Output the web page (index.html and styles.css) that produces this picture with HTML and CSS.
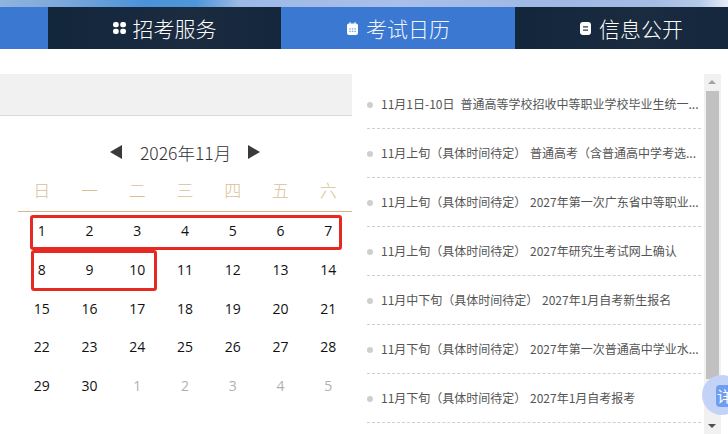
FILE: index.html
```html
<!DOCTYPE html>
<html lang="zh">
<head>
<meta charset="utf-8">
<title>考试日历</title>
<link rel="stylesheet" href="styles.css">
</head>
<body>
<div class="banner"></div>
<nav class="nav">
  <div class="nav-edge"></div>
  <a class="nav-item dark tab-a">
    <svg class="ico ico-a" viewBox="0 0 13 12"><rect x="0" y="0" width="5.800" height="5.300" rx="2.300"/><rect x="7.200" y="0" width="5.800" height="5.300" rx="2.300"/><rect x="0" y="6.700" width="5.800" height="5.300" rx="2.300"/><rect x="7.200" y="6.700" width="5.800" height="5.300" rx="2.300"/></svg>
    <span>招考服务</span>
  </a>
  <a class="nav-item active tab-b">
    <svg class="ico ico-b" viewBox="0 0 11 13"><path d="M2.500 0h1v1.500h4V0h1v1.500h.5a2 2 0 0 1 2 2v7.500a2 2 0 0 1-2 2H2a2 2 0 0 1-2-2V3.500a2 2 0 0 1 2-2h.5z"/><path class="cut" d="M2.300 6.200h1.500v1.200H2.300zM4.800 6.200h1.500v1.200H4.800zM7.300 6.200h1.500v1.200H7.300zM2.300 8.800h1.500V10H2.300zM4.800 8.800h1.500V10H4.800zM7.300 8.800h1.500V10H7.300z"/></svg>
    <span>考试日历</span>
  </a>
  <a class="nav-item dark tab-c">
    <svg class="ico ico-c" viewBox="0 0 11 13"><path d="M3 0h5a3 3 0 0 1 3 3v7a3 3 0 0 1-3 3H3a3 3 0 0 1-3-3V3a3 3 0 0 1 3-3z"/><path class="cut" d="M3 4.200h5v1.200H3zM3 7.500h5v1.200H3z"/></svg>
    <span>信息公开</span>
  </a>
</nav>

<main class="content">
  <section class="calendar">
    <div class="cal-head"></div>
    <div class="cal-body">
      <div class="month">
        <span class="arrow left"></span>
        <span class="month-label">2026年11月</span>
        <span class="arrow right"></span>
      </div>
      <div class="weekdays">
        <span>日</span><span>一</span><span>二</span><span>三</span><span>四</span><span>五</span><span>六</span>
      </div>
      <div class="days">
        <span>1</span><span>2</span><span>3</span><span>4</span><span>5</span><span>6</span><span>7</span>
        <span>8</span><span>9</span><span>10</span><span>11</span><span>12</span><span>13</span><span>14</span>
        <span>15</span><span>16</span><span>17</span><span>18</span><span>19</span><span>20</span><span>21</span>
        <span>22</span><span>23</span><span>24</span><span>25</span><span>26</span><span>27</span><span>28</span>
        <span>29</span><span>30</span><span class="other">1</span><span class="other">2</span><span class="other">3</span><span class="other">4</span><span class="other">5</span>
        <div class="mark mark-a"></div>
        <div class="mark mark-b"></div>
      </div>
    </div>
  </section>

  <section class="events">
    <ul class="event-list">
      <li>11月1日-10日&ensp;普通高等学校招收中等职业学校毕业生统一...</li>
      <li>11月上旬（具体时间待定） 普通高考（含普通高中学考选...</li>
      <li>11月上旬（具体时间待定） 2027年第一次广东省中等职业...</li>
      <li>11月上旬（具体时间待定） 2027年研究生考试网上确认</li>
      <li>11月中下旬（具体时间待定） 2027年1月自考新生报名</li>
      <li>11月下旬（具体时间待定） 2027年第一次普通高中学业水...</li>
      <li>11月下旬（具体时间待定） 2027年1月自考报考</li>
    </ul>
    <div class="scrollbar">
      <span class="sb-up"></span>
      <span class="sb-thumb"></span>
      <span class="sb-down"></span>
    </div>
  </section>
</main>

<div class="float-btn"><span>详</span></div>
</body>
</html>
```

FILE: styles.css
```css
* { box-sizing: border-box; }
html, body { margin: 0; padding: 0; }
body {
  width: 728px;
  height: 434px;
  overflow: hidden;
  position: relative;
  background: #fff;
  font-family: "Noto Sans CJK SC", "Noto Sans", sans-serif;
}
.banner {
  height: 7px;
  background: linear-gradient(90deg, #8fb4de 0%, #7fa9da 8%, #4a93d8 20%, #4f97da 27%, #9db9e6 33%, #a9bfe9 55%, #9fb8e4 75%, #a5bce4 90%, #b5c8e8 96%, #e6ecf6 100%);
}
.nav { display: flex; height: 42px; background: #3a78d2; }
.nav-edge { width: 48px; }
.nav-item {
  display: flex;
  align-items: center;
  justify-content: center;
  color: #fff;
  font-size: 21px;
  font-weight: 300;
}
.tab-a { width: 233px; gap: 7px; }
.tab-b { width: 234px; gap: 8px; padding-left: 1px; }
.tab-c { width: 213px; gap: 8px; padding-left: 20px; }
.nav-item.dark { background: linear-gradient(90deg, #12263c, #1b2b40 60%, #14273d); }
.nav-item.active { background: #3a78d2; color: #f1f5fc; }
.ico { fill: #fff; flex: none; }
.ico-a { width: 13px; height: 12px; }
.ico-b, .ico-c { width: 11px; height: 13px; }
.ico .cut { fill: #2a3d55; }
.ico-b .cut { fill: #7ea5e0; }

.content { display: flex; padding-top: 25px; }
.calendar { width: 352px; flex: none; }
.cal-head { height: 42px; background: #f1f1f1; border-bottom: 1px solid #dcdcdc; }
.cal-body { padding: 18px 0 0 18px; }
.month {
  display: flex;
  align-items: center;
  justify-content: center;
  height: 36px;
  gap: 18px;
  color: #333;
}
.month-label { font-size: 17.500px; font-weight: 300; width: 90px; white-space: nowrap; text-align: center; }
.arrow { width: 0; height: 0; border-top: 7px solid transparent; border-bottom: 7px solid transparent; }
.arrow.left { border-right: 12px solid #3a3a3a; }
.arrow.right { border-left: 12px solid #3a3a3a; }
.weekdays {
  display: grid;
  grid-template-columns: repeat(7, 1fr);
  height: 42px;
  border-bottom: 1px solid #d4b78c;
  color: #d9bf98;
  font-size: 17px;
  font-weight: 300;
  line-height: 39px;
  text-align: center;
}
.days {
  position: relative;
  display: grid;
  grid-template-columns: repeat(7, 1fr);
  grid-auto-rows: 38.800px;
  font-family: "Open Sans", sans-serif;
  color: #111;
  font-size: 14px;
  text-align: center;
  line-height: 38.800px;
}
.days .other { color: #b0b0b0; }
.mark {
  position: absolute;
  border: 3px solid #e62a22;
  border-radius: 3px;
}
.mark-a { left: 12px; top: 3px; width: 312px; height: 35px; }
.mark-b { left: 13px; top: 38px; width: 126px; height: 41px; }

.events { position: relative; flex: 1; display: flex; }
.event-list {
  list-style: none;
  margin: 0;
  padding: 6px 0 0 15px;
  width: 349px;
  height: 360px;
  overflow: hidden;
}
.event-list li {
  position: relative;
  height: 49px;
  width: 334px;
  padding-left: 14px;
  border-bottom: 1px dashed #cfcfcf;
  font-size: 12px;
  line-height: 48px;
  word-spacing: 1px;
  color: #555;
  white-space: nowrap;
}
.event-list li::before {
  content: "";
  position: absolute;
  left: 0;
  top: 22px;
  width: 6px;
  height: 6px;
  border-radius: 50%;
  background: #cfcfcf;
}
.scrollbar {
  position: relative;
  width: 17px;
  height: 360px;
  margin-left: 3px;
  background: #f1f1f1;
  flex: none;
}
.sb-up, .sb-down {
  position: absolute;
  left: 4px;
  width: 0;
  height: 0;
  border-left: 4px solid transparent;
  border-right: 4px solid transparent;
}
.sb-up { top: 6px; border-bottom: 4px solid #a3a3a3; }
.sb-down { bottom: 6px; border-top: 4px solid #505050; }
.sb-thumb {
  position: absolute;
  left: 2px;
  top: 17px;
  width: 13px;
  height: 288px;
  background: #c1c1c1;
}
.float-btn {
  position: absolute;
  left: 702px;
  top: 375px;
  width: 40px;
  height: 40px;
  border-radius: 50%;
  background: #c3d3f8;
}
.float-btn span {
  position: absolute;
  left: 14px;
  top: 10px;
  width: 24px;
  height: 22px;
  border-radius: 4px;
  background: #6f9df0;
  color: #fff;
  font-size: 15px;
  line-height: 22px;
  padding-left: 1px;
}
```
